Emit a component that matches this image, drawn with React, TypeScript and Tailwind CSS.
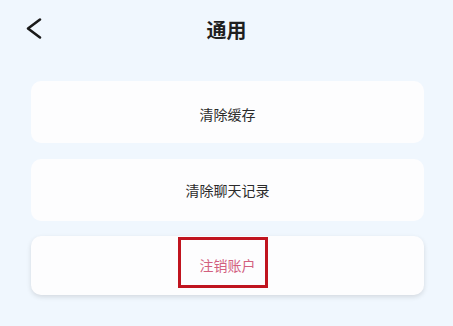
const font = { fontFamily: '"Noto Sans CJK SC", "Noto Sans", sans-serif' };

export default function App() {
  return (
    <div className="h-[326px] w-[453px] overflow-hidden bg-[#f0f7fe]" style={font}>
      <div className="relative flex h-[60px] items-center justify-center">
        <button type="button" className="absolute left-[24px] top-[16px] flex text-[#1a1a1a]">
          <svg width="20" height="26" viewBox="0 0 20 26" fill="none">
            <polyline
              points="16,3.5 4,12.5 16,21.5"
              stroke="currentColor"
              strokeWidth="2.6"
              strokeLinecap="round"
              strokeLinejoin="round"
            />
          </svg>
        </button>
        <h1 className="text-[20px] font-bold text-[#1f1f1f]">通用</h1>
      </div>

      <div className="mt-[21px] flex flex-col gap-4 pl-[31px] pr-[29px]">
        <button
          type="button"
          className="flex h-[62px] items-center justify-center rounded-[10px] bg-[#fdfdfe] pt-[4px] text-[14px] text-[#2b2b2b]"
        >
          清除缓存
        </button>
        <button
          type="button"
          className="flex h-[62px] items-center justify-center rounded-[10px] bg-[#fdfdfe] text-[14px] text-[#2b2b2b]"
        >
          清除聊天记录
        </button>
        <div className="relative -mt-[1px]">
          <button
            type="button"
            className="flex h-[59px] w-full items-center justify-center rounded-[10px] bg-[#fdfdfe] text-[14px] text-[#d2607e] shadow-[0_2px_5px_rgba(0,0,0,0.12)]"
          >
            注销账户
          </button>
          <div className="pointer-events-none absolute left-[147px] top-[1px] h-[51px] w-[90px] border-[3px] border-[#c0141f]" />
        </div>
      </div>
    </div>
  );
}
